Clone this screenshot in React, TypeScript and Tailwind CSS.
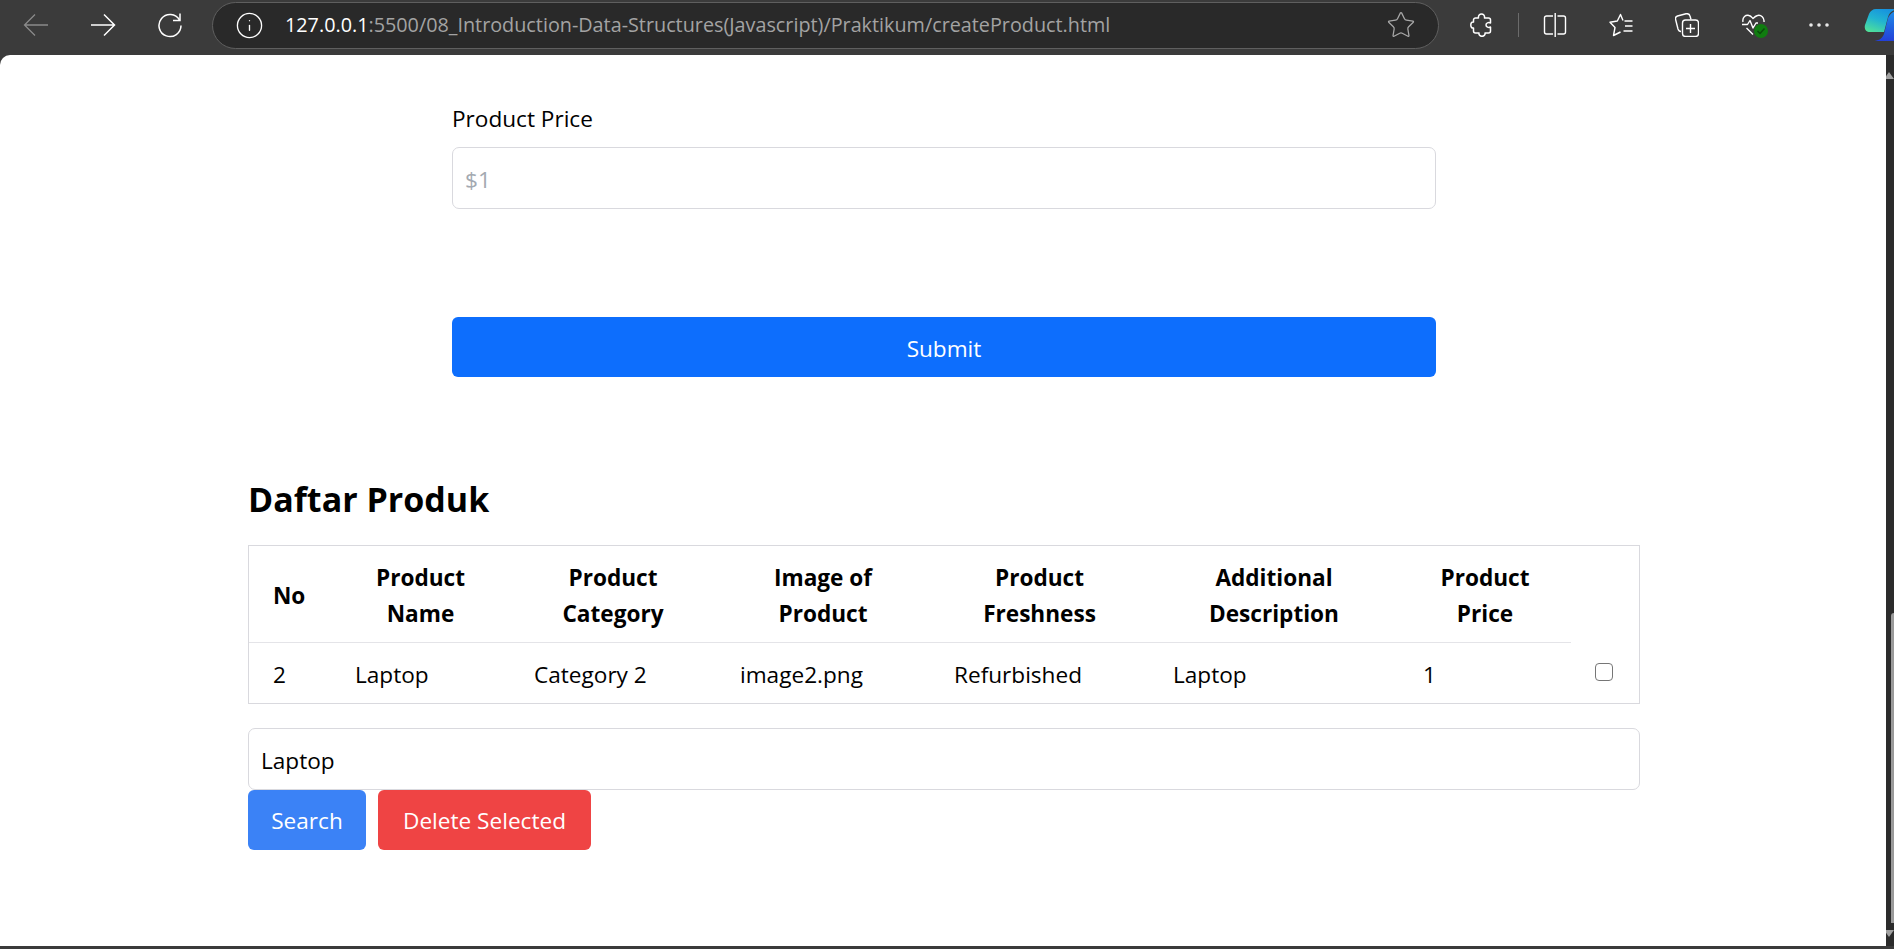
import React from 'react';
import { Info, Star } from 'lucide-react';

const FONT = "font-['Open_Sans','Noto_Sans',sans-serif]";

const BackIcon = ({ color }: { color: string }) => (
  <svg width="26" height="26" viewBox="0 0 26 26" fill="none" stroke={color} strokeWidth="1.3">
    <path d="M25 13H1.500M12 2.500L1.500 13L12 23.500" />
  </svg>
);

const ForwardIcon = () => (
  <svg width="26" height="26" viewBox="0 0 26 26" fill="none" stroke="#fff" strokeWidth="1.5">
    <path d="M1 13H24.500M14 2.500L24.500 13L14 23.500" />
  </svg>
);

const ReloadIcon = () => (
  <svg width="26" height="26" viewBox="0 0 26 26" fill="none" stroke="#fff" strokeWidth="1.5">
    <path d="M22.500 8A11 11 0 1 0 24 13.500" />
    <path d="M23 1.500V8.500H16" />
  </svg>
);

const PuzzleIcon = () => (
  <svg width="24" height="24" viewBox="0 0 24 24" fill="none" stroke="#fff" strokeWidth="1.5" strokeLinejoin="round">
    <path d="M8.500 5C8 2.500 9.800 1 11.500 1S15 2.500 14.500 5H18.500A2 2 0 0 1 20.500 7V10C18.500 9 16 10 16 12S18.500 15 20.500 14V18A2 2 0 0 1 18.500 20H15C15.500 22 13.500 23.300 12 23.300S8.500 22 9 20H5.500A2 2 0 0 1 3.500 18V15C1.500 15.500 .8 13.500 .8 12S1.500 8.500 3.500 9V7A2 2 0 0 1 5.500 5Z" />
  </svg>
);

const SplitIcon = () => (
  <svg width="24" height="24" viewBox="0 0 24 24" fill="none" stroke="#fff" strokeWidth="1.4">
    <path d="M10 3H3.500A2 2 0 0 0 1.500 5V19A2 2 0 0 0 3.500 21H10M14.500 3H20.500A2 2 0 0 1 22.500 5V19A2 2 0 0 1 20.500 21H14.500M12.200 0V24" />
  </svg>
);

const FavoritesIcon = () => (
  <svg width="24" height="24" viewBox="0 0 24 24" fill="none" stroke="#fff" strokeWidth="1.4" strokeLinejoin="round">
    <path d="M14 7.500L11.500 1.500L8.300 8L1 9.200L6 14.500L4.500 22.500L11.500 19" />
    <path d="M15.500 8H23.500M16 13H23.500M14.500 18H23.500" />
  </svg>
);

const CollectionsIcon = () => (
  <svg width="24" height="24" viewBox="0 0 24 24" fill="none" stroke="#fff" strokeWidth="1.4" strokeLinejoin="round">
    <path d="M6 18.500C4.500 18.500 3.500 17.500 3 16L.6 6.500C.2 5 1 3.500 2.500 3L11 .8C13 .4 14.500 1 15 3L16 6.500" />
    <rect x="7.500" y="7" width="16" height="16.500" rx="3" />
    <path d="M15.500 11V20M11 15.500H20" />
  </svg>
);

const HealthIcon = () => (
  <div className="relative h-6 w-6">
    <svg width="24" height="24" viewBox="0 0 24 24" fill="none" stroke="#fff" strokeWidth="1.4" strokeLinejoin="round">
      <path d="M2 9C1 4 5 1.500 8 2.500C10 3 11 4.500 12 5.500C13 4.500 14.500 3 16.500 2.500C20 1.500 23.500 4.500 23 9" />
      <path d="M1 11.500H6.500L9 7.500L12 15L15 10H17M5.500 15L12 21.500" />
    </svg>
    <div className="absolute right-[-3px] bottom-[-1px] flex h-[14px] w-[14px] items-center justify-center rounded-full bg-[#107c10]">
      <svg width="10" height="10" viewBox="0 0 10 10" fill="none" stroke="#0b4a0b" strokeWidth="1.5">
        <path d="M1.500 5L4 7.500L8.500 2.500" />
      </svg>
    </div>
  </div>
);

const DotsIcon = () => (
  <svg width="24" height="24" viewBox="0 0 24 24" fill="#e8e8e8">
    <circle cx="4" cy="12" r="1.800" />
    <circle cx="12" cy="12" r="1.800" />
    <circle cx="20" cy="12" r="1.800" />
  </svg>
);

const CopilotLogo = () => (
  <svg className="shrink-0" width="38" height="34" viewBox="0 0 38 34" fill="none">
    <defs>
      <linearGradient id="copilotA" x1="0.7" y1="0" x2="0.2" y2="1">
        <stop offset="0" stopColor="#1690e0" />
        <stop offset="0.5" stopColor="#22b4d0" />
        <stop offset="1" stopColor="#4fe09a" />
      </linearGradient>
      <linearGradient id="copilotB" x1="0.5" y1="0" x2="0.5" y2="1">
        <stop offset="0" stopColor="#1f8fe8" />
        <stop offset="1" stopColor="#2340d8" />
      </linearGradient>
    </defs>
    <path d="M12 1H34C28 2 25 5 24 9L20 24H6C2 24 0 21 1 17L5 6C6 3 9 1 12 1Z" fill="url(#copilotA)" />
    <path d="M24 10C26 6 29 3 34 2C37 4 38 7 38 10V26C38 30 35 33 31 33H9C14 33 18 31 20 26Z" fill="url(#copilotB)" />
  </svg>
);

const Toolbar = () => (
  <div className="flex h-[55px] shrink-0 items-center overflow-hidden bg-[#3b3b3b] pb-[5px]">
    <div className="flex w-[212px] shrink-0 items-center gap-[41px] pl-[23px]">
      <BackIcon color="#8a8a8a" />
      <ForwardIcon />
      <ReloadIcon />
    </div>
    <div className="flex h-[47px] w-[1227px] shrink-0 items-center rounded-full border border-[#5f5f5f] bg-[#292929] pr-[22px] pl-[22px]">
      <Info size={29} strokeWidth={1.1} color="#fff" />
      <div className="ml-[21px] flex-1 text-[19.8px] whitespace-nowrap text-[#a3a3a3]">
        <span className="text-white">127.0.0.1</span>:5500/08_Introduction-Data-Structures(Javascript)/Praktikum/createProduct.html
      </div>
      <Star size={30} strokeWidth={1} color="#a8a8a8" />
    </div>
    <div className="flex flex-1 items-center pl-[31px]">
      <PuzzleIcon />
      <div className="mx-[24px] h-[24px] w-px shrink-0 bg-[#6b6b6b]" />
      <SplitIcon />
      <div className="ml-[42px]"><FavoritesIcon /></div>
      <div className="ml-[42px]"><CollectionsIcon /></div>
      <div className="ml-[42px]"><HealthIcon /></div>
      <div className="ml-[42px]"><DotsIcon /></div>
      <div className="ml-[33px]"><CopilotLogo /></div>
    </div>
  </div>
);

const Scrollbar = () => (
  <div className="flex w-[8px] shrink-0 flex-col items-end overflow-hidden bg-[#2b2b2b] pt-[17px] pb-[9px]">
    <div className="h-0 w-0 border-x-[5px] border-b-[7px] border-x-transparent border-b-[#a0a0a0]" />
    <div className="flex-1" />
    <div className="h-[310px] w-[3px] rounded-tl-[3px] bg-[#9a9a9a]" />
    <div className="mt-[7px] h-0 w-0 border-x-[5px] border-t-[7px] border-x-transparent border-t-[#a0a0a0]" />
  </div>
);

const columns = [
  { label: 'No', value: '2', width: 'w-[82px]' },
  { label: 'Product Name', value: 'Laptop', width: 'w-[179px]' },
  { label: 'Product Category', value: 'Category 2', width: 'w-[206px]' },
  { label: 'Image of Product', value: 'image2.png', width: 'w-[214px]' },
  { label: 'Product Freshness', value: 'Refurbished', width: 'w-[219px]' },
  { label: 'Additional Description', value: 'Laptop', width: 'w-[250px]' },
  { label: 'Product Price', value: '1', width: 'w-[172px]' },
];

const ProductTable = () => (
  <div className="border border-[#d9d9de]">
    <table className="w-full table-fixed border-collapse">
      <thead>
        <tr>
          {columns.map((col) => (
            <th key={col.label} className={`${col.width} border-b border-[#e4e4e8] px-6 pt-[14px] pb-[10px] text-center text-[22.6px] leading-[36px] font-bold`}>
              {col.label === 'No' ? <span className="block text-left">No</span> : col.label}
            </th>
          ))}
          <th className="w-[68px]" />
        </tr>
      </thead>
      <tbody>
        <tr>
          {columns.map((col) => (
            <td key={col.label} className="h-[60px] px-6 pt-[4px] text-left text-[22.6px] leading-[36px]">{col.value}</td>
          ))}
          <td className="px-6">
            <input type="checkbox" className="mb-[2px] block h-[18px] w-[18px] appearance-none rounded-[4px] border border-[#767676] bg-white" />
          </td>
        </tr>
      </tbody>
    </table>
  </div>
);

export default function App() {
  return (
    <div className={`flex h-screen flex-col overflow-hidden bg-[#3b3b3b] text-black ${FONT}`}>
      <Toolbar />
      <div className="flex min-h-0 flex-1 pb-[3px]">
        <main className="flex-1 rounded-tl-[10px] bg-white pl-[2px]">
          <section className="mx-auto w-[984px] pt-[46px]">
            <label className="block text-[22.6px] leading-[36px]">Product Price</label>
            <input
              placeholder="$1"
              className="mt-[10px] block h-[62px] w-full rounded-[7px] border border-[#d9d9de] px-3 pt-[2px] text-[22.6px] placeholder:text-[#a3a9b1]"
            />
            <button className="mt-[108px] block h-[60px] w-full rounded-[6px] bg-[#0d6efd] pt-[3px] text-[22.6px] text-white">Submit</button>
          </section>
          <section className="mx-auto mt-[99px] w-[1392px]">
            <h2 className="h-[69px] text-[34px] leading-[46px] font-bold">Daftar Produk</h2>
            <ProductTable />
            <input
              defaultValue="Laptop"
              className="mt-[24px] block h-[62px] w-full rounded-[7px] border border-[#d9d9de] px-3 pt-[3px] text-[22.6px]"
            />
            <div className="flex gap-3">
              <button className="h-[60px] w-[118px] rounded-[6px] bg-[#3b82f6] pt-[3px] text-[22.6px] text-white">Search</button>
              <button className="h-[60px] w-[213px] rounded-[6px] bg-[#ef4444] pt-[3px] text-[22.6px] text-white">Delete Selected</button>
            </div>
          </section>
        </main>
        <Scrollbar />
      </div>
    </div>
  );
}
